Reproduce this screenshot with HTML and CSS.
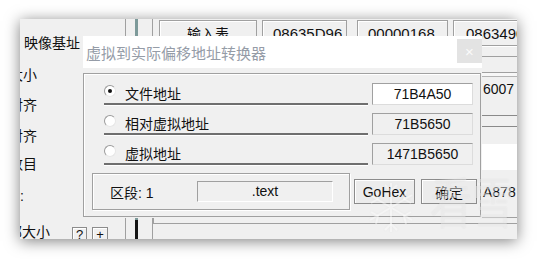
FILE: index.html
```html
<!DOCTYPE html>
<html lang="zh-CN">

<head>
    <meta charset="UTF-8">
    <meta name="viewport" content="width=device-width, initial-scale=1.0">
    <title>虚拟到实际偏移地址转换器</title>
    <link rel="stylesheet" href="styles.css">
</head>

<body>
    <div class="app">
        <!-- left labels, clipped by the window edge -->
        <div class="side">
            <div class="side-head">映像基址</div>
            <div class="lbl lbl-first"><span>代码大小</span></div>
            <div class="lbl"><span>代码对齐</span></div>
            <div class="lbl lbl-third"><span>文件对齐</span></div>
            <div class="lbl lbl-fourth"><span>区段数目</span></div>
            <div class="lbl lbl-colon"><span>:</span></div>
            <div class="size-row">
                <div class="lbl lbl-wide"><span>头部大小</span></div>
                <span class="mini-btn">?</span>
                <span class="mini-btn">+</span>
            </div>
        </div>
        <div class="vline"></div>
        <div class="bar"></div>
        <div class="vline"></div>

        <div class="main">
            <div class="top-row">
                <div class="cell btn-cell">输入表</div>
                <div class="cell hex hex-a">08635D96</div>
                <div class="cell hex hex-b">00000168</div>
                <div class="cell hex hex-c">08634900</div>
            </div>
            <div class="middle">
                <div class="strip">
                    <div class="s-thin"></div>
                    <div class="s-box s-text">6007</div>
                    <div class="s-lines"></div>
                    <div class="s-white"></div>
                    <div class="s-box s-text s-last">A878</div>
                </div>
            </div>
            <div class="bottom-rule"></div>
        </div>

        <!-- converter dialog on top of the main window -->
        <div class="dialog">
            <div class="titlebar">
                <span class="title">虚拟到实际偏移地址转换器</span>
                <span class="close">×</span>
            </div>
            <div class="frame">
                <div class="rows">
                    <div class="row">
                        <div class="opt"><span class="radio checked"></span>文件地址</div>
                        <div class="val val-edit">71B4A50</div>
                    </div>
                    <div class="row">
                        <div class="opt"><span class="radio"></span>相对虚拟地址</div>
                        <div class="val">71B5650</div>
                    </div>
                    <div class="row">
                        <div class="opt"><span class="radio"></span>虚拟地址</div>
                        <div class="val">1471B5650</div>
                    </div>
                </div>
                <div class="section">
                    <div class="group">
                        <span class="group-label">区段: 1</span>
                        <span class="field">.text</span>
                    </div>
                    <button class="btn btn-gohex">GoHex</button>
                    <button class="btn btn-ok">确定</button>
                </div>
            </div>
        </div>
    </div>

    <div class="watermark">
        <svg class="flake" width="48" height="57" viewBox="0 0 48 57">
            <g fill="none" stroke="currentColor" stroke-width="2">
                <path d="M24 4 V53 M3 16 L45 41 M3 41 L45 16" />
                <path d="M18 6 L24 12 L30 6 M18 51 L24 45 L30 51" />
                <path d="M4 24 L11 20 L9 12 M44 24 L37 20 L39 12" />
                <path d="M4 33 L11 37 L9 45 M44 33 L37 37 L39 45" />
            </g>
        </svg>
        <span class="wm-text">看雪</span>
    </div>
</body>

</html>
```

FILE: styles.css
```css
* {
    box-sizing: border-box;
}

/* Page */
body {
    margin: 0;
    width: 537px;
    height: 259px;
    overflow: hidden;
    position: relative;
    padding: 19px 0 0 20px;
    background: #ffffff;
    font-family: "Liberation Sans", "Noto Sans CJK SC", sans-serif;
    font-size: 14px;
    color: #111;
}

/* Main window */
.app {
    position: relative;
    width: 497px;
    height: 220px;
    display: flex;
    overflow: hidden;
    background: #f0f0f0;
    box-shadow: 0 2px 14px rgba(0, 0, 0, 0.5);
}

/* Left label column */
.side {
    width: 105px;
    flex: none;
    display: flex;
    flex-direction: column;
}

.side > * {
    flex: none;
}

.side-head {
    margin-top: 9px;
    height: 30px;
    line-height: 30px;
    padding-left: 4px;
    white-space: nowrap;
}

.lbl {
    width: 17px;
    height: 30px;
    line-height: 30px;
    display: flex;
    justify-content: flex-end;
    overflow: hidden;
    white-space: nowrap;
}

.lbl span {
    flex: none;
}

.lbl-first {
    margin-top: 2px;
}

.lbl-third {
    margin-top: 1px;
}

.lbl-fourth {
    margin-top: -2px;
}

.lbl-colon {
    justify-content: flex-start;
    margin-top: 2px;
}

.size-row {
    margin-top: 6px;
    height: 30px;
    display: flex;
    align-items: center;
}

.lbl-wide {
    width: 30px;
}

.mini-btn {
    width: 15px;
    height: 16px;
    margin: 5px 0 0 22px;
    display: flex;
    align-items: center;
    justify-content: center;
    font-size: 13px;
    border: 1px solid #8c8c8c;
    box-shadow: inset 1px 1px #fff;
}

.mini-btn + .mini-btn {
    width: 16px;
    margin-left: 5px;
}

/* Separators */
.vline {
    width: 1px;
    flex: none;
    background: #a0a0a0;
}

.bar {
    width: 3px;
    flex: none;
    margin: 0 14px 0 9px;
    background: linear-gradient(#7d9a9a 0, #7d9a9a 201px, #151515 201px);
}

/* Main area behind the dialog */
.main {
    flex: 1;
    min-width: 0;
    display: flex;
    flex-direction: column;
}

.top-row {
    display: flex;
    flex: none;
    height: 26px;
    margin-top: 1px;
}

.cell {
    flex: none;
    height: 26px;
    padding-top: 2px;
    line-height: 22px;
    white-space: nowrap;
    border: 1px solid #a0a0a0;
    box-shadow: inset 1px 1px #fff;
}

.btn-cell {
    width: 98px;
    margin-left: 6px;
    text-align: center;
}

.hex {
    padding-left: 10px;
    font-size: 15px;
}

.hex-a {
    width: 85px;
    margin-left: 5px;
}

.hex-b {
    width: 91px;
    margin-left: 10px;
}

.hex-c {
    width: 80px;
    margin-left: 5px;
    padding-left: 12px;
}

.middle {
    flex: 1;
    display: flex;
    justify-content: flex-end;
}

.strip {
    width: 35px;
    display: flex;
    flex-direction: column;
}

.s-thin {
    height: 11px;
    border-top: 1px solid #fff;
    border-bottom: 1px solid #a0a0a0;
}

.s-box {
    margin-top: 15px;
    height: 28px;
    border-top: 1px solid #a0a0a0;
    box-shadow: inset 0 3px 0 #f7f7f7, inset 0 4px 0 #b4b4b4;
}

.s-text {
    padding: 8px 0 0 1px;
    line-height: 16px;
    white-space: nowrap;
}

.s-lines {
    margin-top: 15px;
    height: 12px;
    border-top: 1px solid #8a8a8a;
    border-bottom: 1px solid #8a8a8a;
}

.s-white {
    margin-top: 17px;
    height: 26px;
    background: #fff;
}

.s-last {
    margin-top: 9px;
    height: 25px;
    padding-top: 5px;
    border-top: 0;
    box-shadow: none;
}

.bottom-rule {
    flex: none;
    height: 7px;
    margin-bottom: 15px;
    border: 1px solid #a0a0a0;
    border-right: 0;
}

/* Dialog */
.dialog {
    position: absolute;
    left: 63px;
    top: 17px;
    width: 399px;
    z-index: 1;
    background: #f0f0f0;
}

.titlebar {
    height: 32px;
    display: flex;
    align-items: center;
    padding-left: 3px;
    background: #ffffff;
}

.title {
    font-family: "Noto Sans CJK SC", sans-serif;
    font-size: 15px;
    color: #959ca7;
}

.close {
    margin-left: auto;
    align-self: flex-start;
    margin-top: 3px;
    width: 25px;
    height: 24px;
    display: flex;
    align-items: center;
    justify-content: center;
    font-size: 15px;
    color: #fafafa;
    background: #e3e3e3;
}

.frame {
    width: 398px;
    height: 144px;
    margin: 5px 0 1px;
    padding: 9px 0 0 20px;
    border: 1px solid #a0a0a0;
    box-shadow: inset 1px 1px #fff;
}

.rows {
    display: flex;
    flex-direction: column;
    gap: 8px;
}

.row {
    display: flex;
    height: 22px;
}

.opt {
    width: 264px;
    display: flex;
    align-items: center;
    padding-bottom: 1px;
    border-bottom: 2px solid #6f6f6f;
    box-shadow: 0 1px 0 #fff;
    font-family: "Noto Sans CJK SC", sans-serif;
}

.radio {
    position: relative;
    width: 12px;
    height: 12px;
    margin: -3px 9px 0 0;
    border-radius: 50%;
    border: 1px solid;
    border-color: #9a9a9a #e6e6e6 #e6e6e6 #9a9a9a;
    background: #fff;
}

.radio.checked::after {
    content: "";
    position: absolute;
    left: 3px;
    top: 3px;
    width: 4px;
    height: 4px;
    border-radius: 50%;
    background: #111;
}

.val {
    width: 101px;
    margin-left: 4px;
    text-align: center;
    line-height: 20px;
    border: 1px solid;
    border-color: #a0a0a0 #dcdcdc #dcdcdc #a0a0a0;
}

.val-edit {
    background: #ffffff;
}

/* Section row */
.section {
    display: flex;
    align-items: center;
    margin: 8px 0 0 -12px;
}

.group {
    width: 258px;
    height: 37px;
    display: flex;
    align-items: center;
    padding: 0 16px 0 17px;
    border: 1px solid #a0a0a0;
    box-shadow: inset 1px 1px #fff, 1px 1px #fff;
}

.field {
    margin-left: auto;
    width: 136px;
    height: 21px;
    line-height: 19px;
    text-align: center;
    border: 1px solid;
    border-color: #a0a0a0 #fff #fff #a0a0a0;
}

.btn {
    height: 25px;
    padding: 0;
    font: inherit;
    color: #111;
    background: #ececec;
    border: 1px solid #8c8c8c;
    box-shadow: inset 1px 1px #fff;
}

.btn-gohex {
    width: 61px;
    margin-left: 4px;
}

.btn-ok {
    width: 56px;
    margin-left: 6px;
}

/* Watermark */
.watermark {
    position: absolute;
    left: 367px;
    top: 172px;
    z-index: 2;
    display: flex;
    align-items: flex-start;
    pointer-events: none;
    color: rgba(255, 255, 255, 0.45);
}

.flake {
    margin-top: 7px;
    filter: drop-shadow(0 0 1px rgba(0, 0, 0, 0.08));
}

.wm-text {
    margin-left: 15px;
    font-family: "Noto Sans CJK SC", sans-serif;
    font-size: 42px;
    line-height: 42px;
    transform: scaleY(1.3);
    transform-origin: top;
    text-shadow: 0 0 1px rgba(0, 0, 0, 0.1);
}
```
